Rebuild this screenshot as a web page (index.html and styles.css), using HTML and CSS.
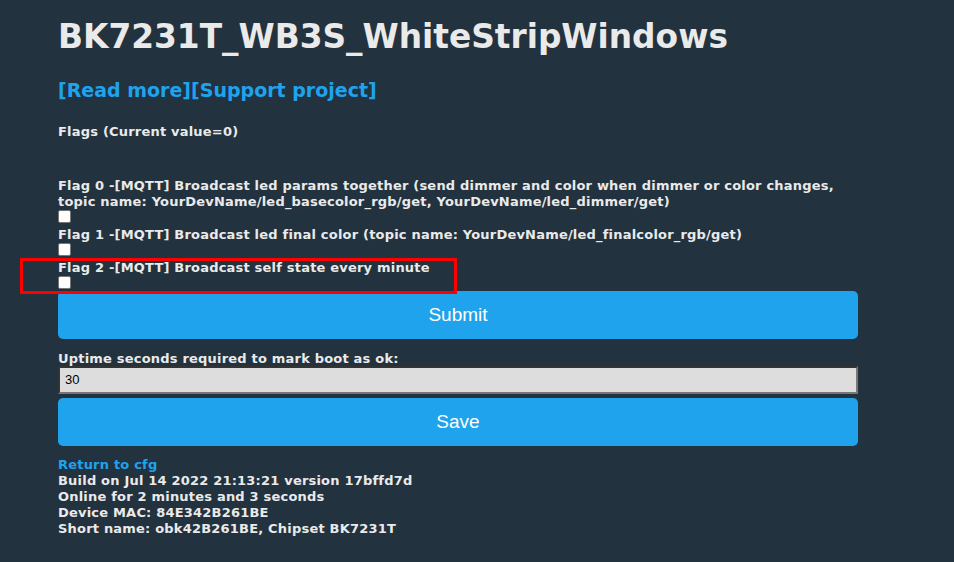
FILE: index.html
```html
<!DOCTYPE html>
<html>
<head>
<meta charset="utf-8">
<link rel="stylesheet" href="styles.css">
</head>
<body>
<div class="main">
  <h1 class="title">BK7231T_WB3S_WhiteStripWindows</h1>
  <div class="links"><a href="#">[Read more]</a><a href="#">[Support project]</a></div>
  <form class="flags">
    <div class="flags-head">Flags (Current value=0)</div>
    <div class="flag">
      <label>Flag 0 -[MQTT] Broadcast led params together (send dimmer and color when dimmer or color changes, topic name: YourDevName/led_basecolor_rgb/get, YourDevName/led_dimmer/get)</label>
      <span class="cb"></span>
    </div>
    <div class="flag">
      <label>Flag 1 -[MQTT] Broadcast led final color (topic name: YourDevName/led_finalcolor_rgb/get)</label>
      <span class="cb"></span>
    </div>
    <div class="flag">
      <label>Flag 2 -[MQTT] Broadcast self state every minute</label>
      <span class="cb"></span>
    </div>
    <button type="button" class="btn">Submit</button>
  </form>
  <form class="boot">
    <label class="boot-label">Uptime seconds required to mark boot as ok:</label>
    <div class="input">30</div>
    <button type="button" class="btn">Save</button>
  </form>
  <div class="footer">
    <a href="#">Return to cfg</a>
    <div>Build on Jul 14 2022 21:13:21 version 17bffd7d</div>
    <div>Online for 2 minutes and 3 seconds</div>
    <div>Device MAC: 84E342B261BE</div>
    <div>Short name: obk42B261BE, Chipset BK7231T</div>
  </div>
</div>
<div class="highlight"></div>
</body>
</html>
```
FILE: styles.css
```css
html, body {
  margin: 0;
  padding: 0;
}
body {
  background: #22323f;
  color: #eaeaea;
  font-family: "DejaVu Sans", Verdana, sans-serif;
  font-weight: bold;
  font-size: 13px;
  line-height: 16px;
  letter-spacing: 0.2px;
  width: 954px;
  height: 562px;
  overflow: hidden;
  position: relative;
}
.main {
  width: 800px;
  padding-left: 58px;
  display: flex;
  flex-direction: column;
}
a {
  color: #1fa3ec;
  text-decoration: none;
}
.title {
  margin: 18px 0 0 0;
  font-size: 32.8px;
  line-height: 38px;
  font-weight: bold;
  letter-spacing: 0;
}
.links {
  margin-top: 22px;
  font-size: 19px;
  line-height: 24px;
  letter-spacing: 0;
}
.flags {
  display: flex;
  flex-direction: column;
  margin-top: 22px;
}
.flags-head {
  margin-bottom: 38px;
}
.flag {
  display: flex;
  flex-direction: column;
  margin-bottom: 4px;
}
.cb {
  display: block;
  width: 11px;
  height: 11px;
  margin: 0;
  background: #fff;
  border: 1px solid #767676;
  border-radius: 2px;
}
.btn {
  display: block;
  width: 800px;
  height: 48px;
  border: 0;
  border-radius: 5px;
  background: #1fa3ec;
  color: #fff;
  font-family: "Liberation Sans", Arial, sans-serif;
  font-size: 19px;
  font-weight: normal;
  letter-spacing: 0;
  padding: 0;
}
.flags .btn {
  margin-top: -2px;
}
.boot {
  display: flex;
  flex-direction: column;
  margin-top: 13px;
}
.boot-label {
  line-height: 14px;
}
.input {
  box-sizing: border-box;
  width: 800px;
  height: 28px;
  background: #dddddd;
  color: #000;
  border-style: solid;
  border-width: 2px;
  border-color: #333 #777 #777 #333;
  font-family: "Liberation Sans", Arial, sans-serif;
  font-weight: normal;
  font-size: 13px;
  line-height: 24px;
  letter-spacing: 0;
  padding-left: 5px;
}
.boot .btn {
  margin-top: 4px;
}
.footer {
  display: flex;
  flex-direction: column;
  margin-top: 11px;
}
.highlight {
  position: absolute;
  left: 20px;
  top: 258px;
  width: 431px;
  height: 30px;
  border: 3px solid #ff0000;
}
```
